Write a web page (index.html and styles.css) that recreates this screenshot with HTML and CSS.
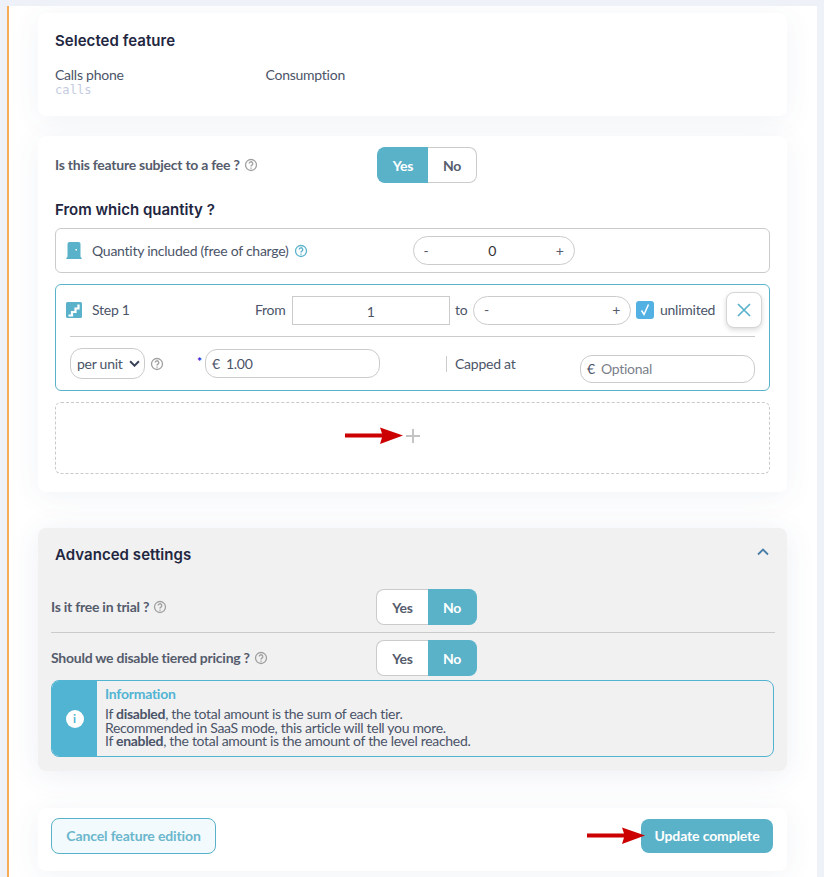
FILE: index.html
```html
<!DOCTYPE html>
<html lang="en">
<head>
<meta charset="utf-8">
<title>Feature edition</title>
<link rel="stylesheet" href="styles.css">
</head>
<body>
<main class="panel">
  <section class="card selected">
    <h2 class="title">Selected feature</h2>
    <div class="selected-row">
      <div class="selected-name">Calls phone<code class="slug">calls</code></div>
      <div>Consumption</div>
    </div>
  </section>

  <section class="card pricing">
    <div class="question">
      <div class="q-label">Is this feature subject to a fee ?
        <svg class="help" viewBox="0 0 14 14"><circle cx="7" cy="7" r="5.5"/><path d="M5.2 5.6a1.8 1.8 0 1 1 2.7 1.5c-.6.4-.9.7-.9 1.3"/><path d="M7 9.4v1.300"/></svg>
      </div>
      <div class="toggle"><span class="opt on">Yes</span><span class="opt">No</span></div>
    </div>
    <h3 class="subtitle">From which quantity ?</h3>
    <div class="qty-box">
      <svg class="door" viewBox="0 0 16 17"><path d="M0 17l1.500-2.500V2A2 2 0 0 1 3.500 0h9a2 2 0 0 1 2 2v12.500L16 17z"/><rect x="9.500" y="7" width="1.500" height="1.500" fill="#fff"/></svg>
      <span class="qty-label">Quantity included (free of charge)</span>
      <svg class="help teal" viewBox="0 0 14 14"><circle cx="7" cy="7" r="5.5"/><path d="M5.2 5.6a1.8 1.8 0 1 1 2.7 1.5c-.6.4-.9.7-.9 1.3"/><path d="M7 9.4v1.300"/></svg>
      <div class="stepper qty-stepper"><span>-</span><b>0</b><span>+</span></div>
    </div>
    <div class="step-box">
      <div class="step-row">
        <svg class="stairs" viewBox="0 0 16 16"><rect width="16" height="16" rx="1.500"/><path d="M2.500 13.500h3.500v-3.500h3.500v-3.500h3v-4" fill="none" stroke="#fff" stroke-width="2.200"/></svg>
        <span class="step-name">Step 1</span>
        <span class="from">From</span>
        <div class="from-input">1</div>
        <span class="to">to</span>
        <div class="stepper to-stepper"><span>-</span><span>+</span></div>
        <span class="check"><svg viewBox="0 0 18 18"><path d="M5.500 9.500l2.500 4 4.500-10" fill="none" stroke="#fff" stroke-width="1.500"/></svg></span>
        <span class="unlimited">unlimited</span>
        <button class="close"><svg viewBox="0 0 14 14"><path d="M1 1l12 12M13 1L1 13"/></svg></button>
      </div>
      <div class="step-row2">
        <div class="select">per unit<svg viewBox="0 0 10 6"><path d="M1 1l4 4 4-4"/></svg></div>
        <svg class="help" viewBox="0 0 14 14"><circle cx="7" cy="7" r="5.5"/><path d="M5.2 5.6a1.8 1.8 0 1 1 2.7 1.5c-.6.4-.9.7-.9 1.3"/><path d="M7 9.4v1.300"/></svg>
        <span class="star">*</span>
        <div class="money"><span>€</span><span>1.00</span></div>
        <span class="capped">Capped at</span>
        <div class="money optional"><span>€</span><span class="ph">Optional</span></div>
      </div>
    </div>
    <div class="add-box">
      <svg class="arrow add-arrow" viewBox="0 0 58 17"><path d="M0 6.500h37L35 .5l23 8-23 8.500 2-6.500H0z"/></svg>
      <svg class="plus" viewBox="0 0 14 14"><path d="M7 0v14M0 7h14"/></svg>
    </div>
  </section>

  <section class="advanced">
    <div class="adv-head">
      <h2 class="title">Advanced settings</h2>
      <svg class="chevron" viewBox="0 0 12 8"><path d="M1 6.500l5-5 5 5"/></svg>
    </div>
    <div class="question adv-q first">
      <div class="q-label">Is it free in trial ?
        <svg class="help" viewBox="0 0 14 14"><circle cx="7" cy="7" r="5.5"/><path d="M5.2 5.6a1.8 1.8 0 1 1 2.7 1.5c-.6.4-.9.7-.9 1.3"/><path d="M7 9.4v1.300"/></svg>
      </div>
      <div class="toggle"><span class="opt">Yes</span><span class="opt on">No</span></div>
    </div>
    <div class="question adv-q second">
      <div class="q-label">Should we disable tiered pricing ?
        <svg class="help" viewBox="0 0 14 14"><circle cx="7" cy="7" r="5.5"/><path d="M5.2 5.6a1.8 1.8 0 1 1 2.7 1.5c-.6.4-.9.7-.9 1.3"/><path d="M7 9.4v1.300"/></svg>
      </div>
      <div class="toggle"><span class="opt">Yes</span><span class="opt on">No</span></div>
    </div>
    <div class="info">
      <div class="info-side"><span class="info-dot">i</span></div>
      <div class="info-body">
        <div class="info-title">Information</div>
        <p>If <b>disabled</b>, the total amount is the sum of each tier.<br>Recommended in SaaS mode, this article will tell you more.<br>If <b>enabled</b>, the total amount is the amount of the level reached.</p>
      </div>
    </div>
  </section>

  <section class="card footer">
    <button class="btn cancel">Cancel feature edition</button>
    <svg class="arrow foot-arrow" viewBox="0 0 58 17"><path d="M0 6.500h37L35 .5l23 8-23 8.500 2-6.500H0z"/></svg>
    <button class="btn update">Update complete</button>
  </section>
</main>
</body>
</html>
```

FILE: styles.css
```css
* { box-sizing: border-box; }
html, body { height: 100%; }
body {
  margin: 0;
  padding: 6px 7px 0;
  background: #eef1f8;
  font-family: "Lato", sans-serif;
  font-size: 14px;
  letter-spacing: -.25px;
  color: #4b5468;
  overflow: hidden;
}
.panel {
  position: relative;
  width: 810px;
  height: 871px;
  background: #fff;
  border-left: 2px solid #f6ab57;
  padding: 7px 0 0 29px;
  overflow: hidden;
}
.card {
  width: 749px;
  background: #fff;
  border-radius: 8px;
  box-shadow: 0 4px 30px rgba(60, 80, 130, .07);
}
.title {
  margin: 0;
  font-family: "Inter", sans-serif;
  font-size: 15px;
  font-weight: 600;
  letter-spacing: .05px;
  color: #22263f;
}
.selected { height: 103px; padding: 18px 17px 0; }
.selected-row { display: flex; margin-top: 17px; line-height: 15px; }
.selected-name { width: 210.500px; }
.slug {
  display: block;
  margin-top: 1px;
  font-family: "DejaVu Sans Mono", monospace;
  font-size: 12px;
  letter-spacing: .1px;
  line-height: 15px;
  color: #c3cbe0;
}
.pricing { height: 356px; margin-top: 20px; padding: 11px 17px 0; }
.question { display: flex; align-items: center; }
.q-label { width: 322px; font-weight: 700; display: flex; align-items: center; gap: 4px; padding-bottom: 1px; color: #555c6c; }
.help { width: 14px; height: 14px; fill: none; stroke: #a0a0a0; stroke-width: 1.300; flex: none; }
.help.teal { stroke: #5ab2ca; }
.toggle { display: flex; height: 36px; font-weight: 700; }
.opt {
  width: 51px;
  display: flex;
  align-items: center;
  justify-content: center;
  color: #555c6c;
  background: #fff;
  border: 1px solid #cbcbcb;
}
.opt:first-child { border-right: 0; border-radius: 8px 0 0 8px; }
.opt:last-child { width: 49px; border-left: 0; border-radius: 0 8px 8px 0; }
.opt.on { background: #5ab2c9; border-color: #5ab2c9; color: #fff; }
.subtitle {
  margin: 18px 0 0;
  font-family: "Inter", sans-serif;
  font-size: 15px;
  font-weight: 600;
  letter-spacing: 0;
  line-height: 18px;
  color: #22263f;
}
.qty-box {
  display: flex;
  align-items: center;
  height: 45px;
  margin-top: 9px;
  padding-left: 10px;
  border: 1px solid #cbcbcb;
  border-radius: 6px;
}
.door { width: 16px; height: 17px; fill: #5ab2ca; flex: none; }
.qty-label { margin-left: 10px; }
.qty-box .help { margin-left: 5px; }
.stepper {
  display: flex;
  justify-content: space-between;
  align-items: center;
  height: 29px;
  padding: 0 10px;
  border: 1px solid #cbcbcb;
  border-radius: 15px;
  color: #555c6c;
}
.stepper b { font-weight: 400; color: #333; }
.qty-stepper { width: 162px; margin-left: 105px; }
.to-stepper { width: 158px; margin: 1px 0 0 5px; padding-bottom: 2px; }
.step-box {
  height: 107px;
  margin-top: 11px;
  padding: 7px 7px 0 14px;
  border: 1px solid #5ab2ca;
  border-radius: 6px;
}
.step-row {
  display: flex;
  align-items: center;
  height: 36px;
  position: relative;
}
.step-row::after {
  content: "";
  position: absolute;
  left: 0;
  right: 7px;
  top: 44px;
  height: 1px;
  background: #cbcbcb;
}
.stairs { width: 16px; height: 16px; margin-left: -4px; fill: #5ab2ca; flex: none; }
.step-name { margin-left: 10px; width: 163px; flex: none; padding-bottom: 2px; }
.from { width: 37px; flex: none; padding-bottom: 2px; }
.from-input {
  width: 158px;
  height: 29px;
  margin-top: 1px;
  line-height: 29px;
  text-align: center;
  border: 1px solid #cbcbcb;
  letter-spacing: .5px;
}
.to { margin-left: 5px; width: 13px; flex: none; padding-bottom: 2px; }
.check {
  width: 18px;
  height: 18px;
  margin-left: 5px;
  border-radius: 3px;
  background: #52b0e2;
  flex: none;
  display: flex;
}
.unlimited { margin-left: 6px; width: 57px; flex: none; padding-bottom: 2px; }
.close {
  width: 36px;
  height: 36px;
  margin-left: 9px;
  padding: 10px;
  background: #fff;
  border: 1px solid #d5d5d5;
  border-radius: 8px;
  box-shadow: 0 2px 5px rgba(0, 0, 0, .15);
  display: flex;
  flex: none;
}
.close svg { width: 14px; height: 14px; stroke: #5ab2ca; stroke-width: 1.700; fill: none; }
.step-row2 { display: flex; align-items: flex-start; margin-top: 21px; position: relative; }
.step-row2 > * { flex: none; }
.select {
  width: 75px;
  height: 31px;
  margin-top: -1px;
  padding-left: 6px;
  display: flex;
  align-items: center;
  gap: 6px;
  border: 1px solid #cbcbcb;
  border-radius: 12px;
}
.select svg { width: 11px; height: 7px; fill: none; stroke: #3a4258; stroke-width: 1.800; }
.step-row2 .help { margin: 8px 0 0 5px; }
.star { width: 8px; margin-left: 33px; color: #2020e0; font-size: 12px; font-weight: 700; line-height: 26px; }
.money {
  width: 175px;
  height: 29px;
  padding-left: 6px;
  display: flex;
  align-items: center;
  gap: 6px;
  border: 1px solid #cbcbcb;
  border-radius: 12px;
}
.capped {
  margin-left: 66px;
  width: 134px;
  height: 16px;
  margin-top: 7px;
  line-height: 16px;
  padding-left: 8px;
  border-left: 1px solid #cbcbcb;
}
.optional { height: 28px; margin-top: 6px; padding-bottom: 2px; }
.ph { color: #7b7f8b; }
.add-box {
  position: relative;
  display: flex;
  align-items: center;
  justify-content: center;
  height: 72px;
  margin-top: 11px;
  padding-bottom: 4px;
  border: 1px dashed #c9c9c9;
  border-radius: 6px;
}
.plus { width: 14px; height: 14px; stroke: #c4c4c4; stroke-width: 2; fill: none; }
.arrow { fill: #cc0000; }
.add-arrow { position: absolute; left: 289px; top: 24px; width: 58px; height: 17px; }
.advanced {
  width: 749px;
  height: 243px;
  margin-top: 36px;
  padding: 0 13px;
  background: #f1f1f2;
  border-radius: 8px;
  box-shadow: 0 4px 30px rgba(60, 80, 130, .09);
}
.adv-head { display: flex; align-items: center; justify-content: space-between; height: 53px; padding: 0 5px 0 4px; }
.chevron { width: 12px; height: 8px; fill: none; stroke: #4a7fa8; stroke-width: 1.800; margin-bottom: 5px; }
.adv-q { height: 36px; }
.adv-q .q-label { width: 325px; }
.adv-q .opt:first-child { width: 52px; }
.first { margin-top: 8px; }
.second { margin-top: 15px; position: relative; }
.second::before { content: ""; position: absolute; left: 0; width: 724px; top: -8px; height: 1px; background: #cbcbcb; }
.info {
  display: flex;
  width: 723px;
  height: 77px;
  margin-top: 4px;
  border: 1px solid #52b4d3;
  border-radius: 8px;
  overflow: hidden;
}
.info-side { width: 45px; background: #52b4d3; display: flex; align-items: center; justify-content: center; }
.info-dot {
  width: 18px;
  height: 18px;
  border-radius: 50%;
  background: #fff;
  color: #52b4d3;
  font-size: 12px;
  font-weight: 700;
  line-height: 18px;
  text-align: center;
}
.info-body { padding: 4px 8px; }
.info-title { font-weight: 700; color: #52b4d3; line-height: 17px; }
.info-body p { margin: 5px 0 0; line-height: 13.500px; letter-spacing: -.31px; }
.footer {
  position: relative;
  display: flex;
  align-items: center;
  justify-content: space-between;
  height: 63px;
  margin-top: 37px;
  padding: 0 14px 7px 13px;
}
.btn {
  font-family: "Lato", sans-serif;
  font-size: 14px;
  font-weight: 700;
  letter-spacing: -.13px;
  border-radius: 8px;
  padding: 0 0 2px;
}
.cancel { width: 165px; height: 36px; background: #f2fafd; border: 1px solid #5ab2ca; color: #6bb6cc; }
.update { width: 132px; height: 34px; background: #5ab2c9; border: 0; color: #fff; }
.foot-arrow { position: absolute; left: 549px; top: 19px; width: 58px; height: 17px; }
```
